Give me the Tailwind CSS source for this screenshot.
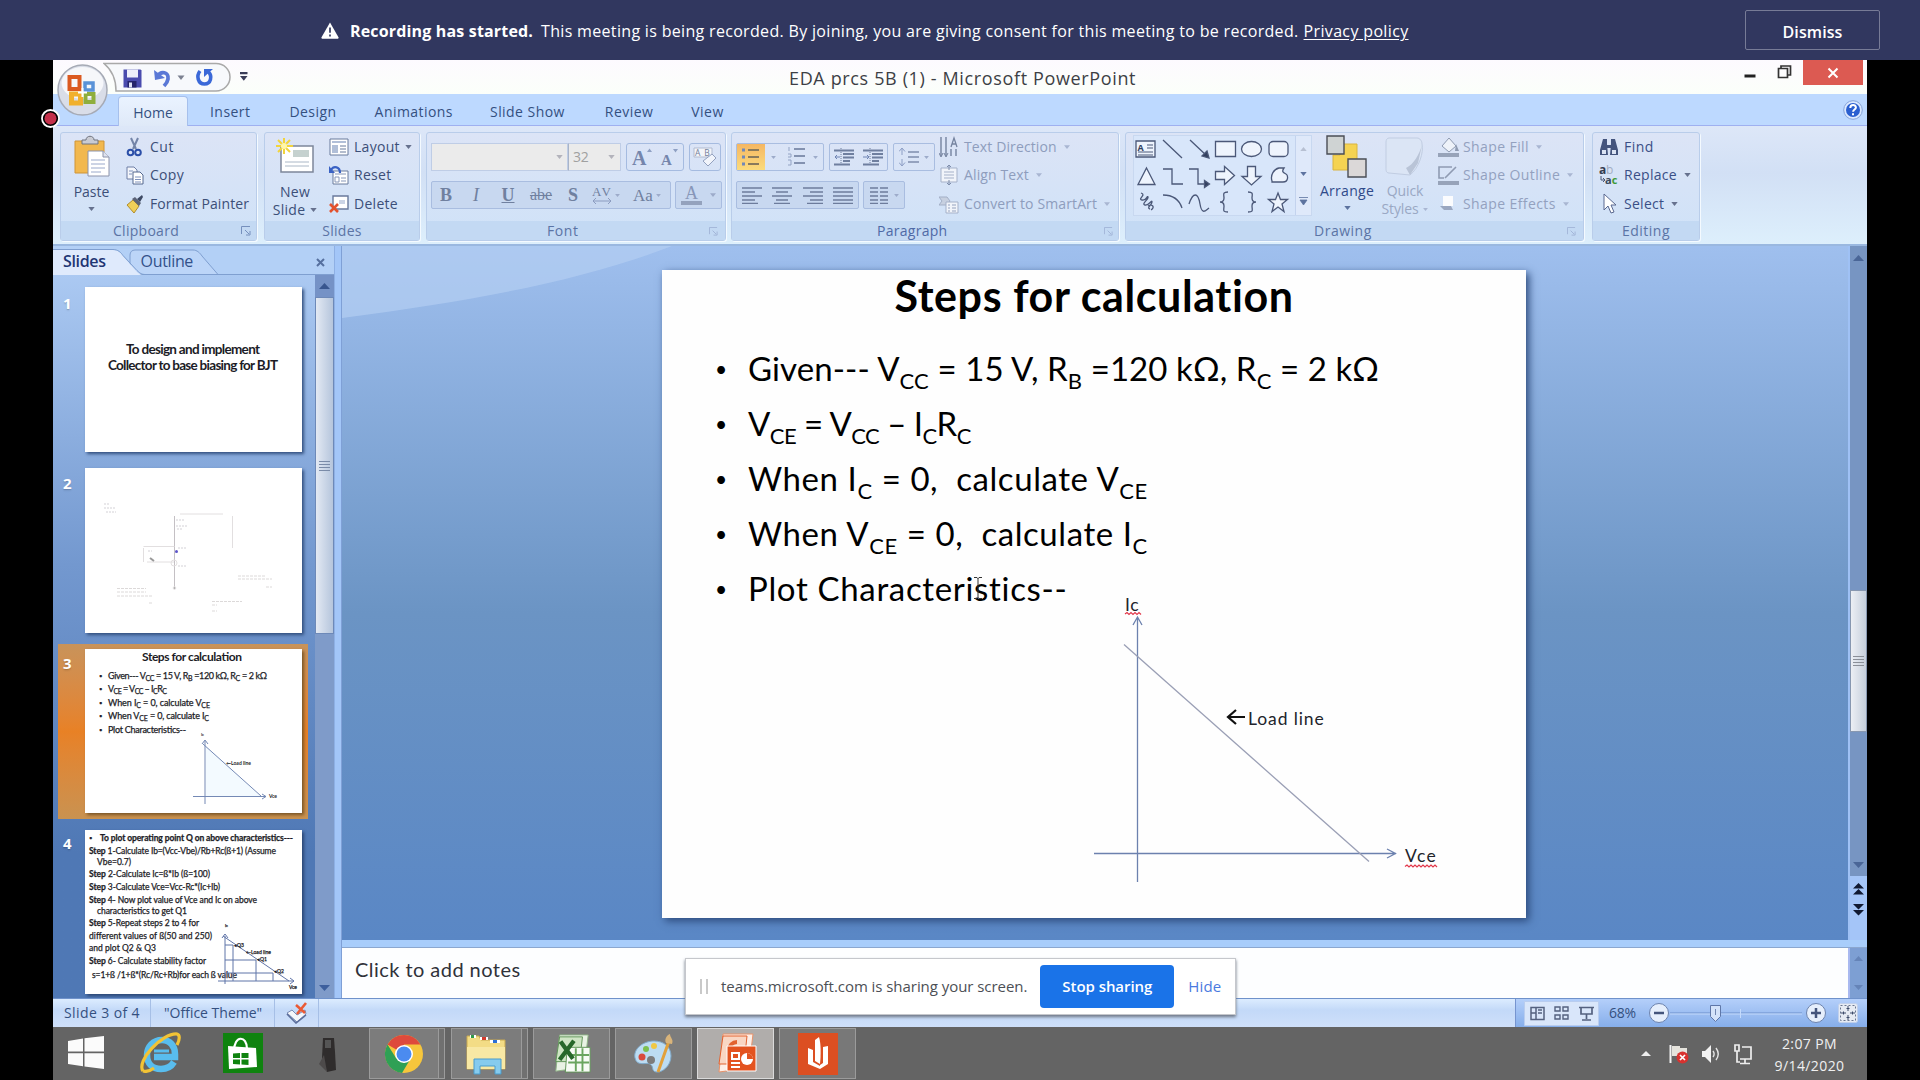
<!DOCTYPE html>
<html lang="en">
<head>
<meta charset="utf-8">
<title>EDA prcs 5B (1) - Microsoft PowerPoint</title>
<script src="https://cdn.jsdelivr.net/npm/@tailwindcss/browser@4"></script>
</head>
<body class="w-[1920px] h-[1080px] overflow-hidden bg-black flex flex-col font-['Open_Sans',sans-serif] text-[14px] leading-none tracking-[0.28px] text-[#3c4f78] whitespace-nowrap">

<!-- meeting banner -->
<header class="h-[60px] shrink-0 bg-[#31375f] text-white flex items-center pl-[321px] pr-10 pt-[2px] text-[16px]">
  <svg class="w-[18px] h-[17px] mt-[-2px]" viewBox="0 0 18 17"><path d="M9 .5 17.6 15.6a.9.9 0 0 1-.8 1.1H1.2a.9.9 0 0 1-.8-1.1z" fill="#fff"/><path d="M9 5.5v5.2M9 12.6v2" stroke="#31375f" stroke-width="1.7"/></svg>
  <span class="ml-[11px] font-bold tracking-[0.17px]">Recording has started.</span>
  <span class="ml-2 tracking-[0.32px]">This meeting is being recorded. By joining, you are giving consent for this meeting to be recorded.</span>
  <a class="ml-[5px] underline underline-offset-2 tracking-[0.35px]">Privacy policy</a>
  <button class="ml-auto w-[135px] h-10 border border-[#777b96] rounded-[2px] font-semibold mt-[-2px] pt-[3px] tracking-[0.1px]">Dismiss</button>
</header>

<div class="relative w-[1814px] h-[1020px] ml-[53px] flex flex-col">

<!-- title bar -->
<div class="h-[34px] shrink-0 bg-gradient-to-b from-[#fdfaff] to-[#fbfffa] flex items-start">
  <svg class="w-[200px] h-[34px] ml-[50px]" viewBox="0 0 200 34" fill="none">
    <path d="M1 3.500h112c8 0 14 6 14 13.500s-6 14-14 14H13c0-10-3-20-12-27.500z" fill="#f7f9fc" stroke="#a9a9a9" stroke-width="1.500"/>
    <path d="M20.500 9.500h17l1 1v17h-18z" fill="#4a4cae"/><path d="M24 9.500h11v8H24z" fill="#eef0fb"/><path d="M24.500 21h9v6.500h-9z" fill="#25246a"/><path d="M26 22.500h3v5h-3z" fill="#dfe2f5"/>
    <path d="M51 10l1 10 10-2z" fill="#5a78d6"/><path d="M54 17c4-7 12-5 11 2-.4 3-2 5-4 7" stroke="#5a78d6" stroke-width="3.800"/>
    <path d="M74.500 15.500h7l-3.500 4.500z" fill="#7b8090"/>
    <path d="M97 11c-4 5-2 13 4.500 13s8-8 4-12" stroke="#3a68d8" stroke-width="3.600"/><path d="M110 9h-9v8z" fill="#3a68d8"/>
    <path d="M137 12h7.500v2.200H137zM137 16h7.500l-3.700 4.800z" fill="#3a3c58"/>
  </svg>
  <span class="ml-[486px] mt-[9px] text-[18px] tracking-[0.64px] text-[#3d3f45]">EDA prcs 5B (1) - Microsoft PowerPoint</span>
  <div class="ml-auto flex items-start">
    <svg class="w-[60px] h-[26px]" viewBox="0 0 60 26" fill="none"><path d="M1.500 16h11" stroke="#222" stroke-width="3"/><path d="M35.500 8.500h9v9h-9zM38 8V6h9.500v9H45" stroke="#333" stroke-width="1.700"/></svg>
    <div class="w-[60px] h-[25px] bg-[#dc5a52] flex items-center justify-center mr-[4px]"><svg class="w-3 h-3" viewBox="0 0 12 12"><path d="M1.500 1.500l9 9M10.500 1.500l-9 9" stroke="#fff" stroke-width="2"/></svg></div>
  </div>
</div>

<!-- tab strip -->
<nav class="h-[32px] shrink-0 bg-[#bdd9ff] border-b border-[#9fb0f0] flex items-end text-[#34507f] pl-[65px]">
  <div class="w-[70px] h-[30px] bg-gradient-to-b from-[#eaf3ff] to-[#dfe9f8] border border-b-0 border-[#a6c0ec] rounded-t-[4px] flex justify-center pt-[9px] mb-[-1px] tracking-normal">Home</div>
  <div class="flex items-center h-[27px] tracking-[0.45px]">
    <span class="ml-[22px]">Insert</span>
    <span class="ml-[39px]">Design</span>
    <span class="ml-[38px]">Animations</span>
    <span class="ml-[37px]">Slide Show</span>
    <span class="ml-[40px]">Review</span>
    <span class="ml-[38px]">View</span>
  </div>
  <svg class="w-5 h-5 ml-auto mr-[4px] mb-[5px]" viewBox="0 0 20 20"><circle cx="10" cy="10" r="9.300" fill="#dbe9ff" stroke="#86a3d8"/><circle cx="10" cy="10" r="7" fill="#2a5fd0"/><path d="M7.300 8c0-4 5.600-3.700 5.600-.6 0 2.200-2.800 2-2.800 4.300M10 13.200v2" fill="none" stroke="#fff" stroke-width="2"/></svg>
</nav>

<!-- ribbon -->
<div class="h-[120px] shrink-0 bg-gradient-to-b from-[#dde7f8] via-[#d2e0f5] via-40% to-[#ddeffc] border-b-2 border-[#9ab8e0] flex pl-[7px] pt-[6px]">

  <!-- Clipboard -->
  <section class="w-[197px] h-[109px] border border-[#b9cdea] rounded-[3px] shadow-[1px_1px_0_#f4faff] bg-gradient-to-b from-[#dce4f6] to-[#cfe2f8] flex flex-col">
    <div class="h-[88px] flex">
      <div class="w-[61px] flex flex-col items-center">
        <svg class="w-[38px] h-[42px] mt-[2px]" viewBox="0 0 38 42"><path d="M2 6h29v32H2z" fill="#f2b84e" stroke="#cf9437"/><path d="M9 9V5h4c0-5 8-5 8 0h4v4z" fill="#c9cbd3" stroke="#70747f"/><path d="M15 16h15l6 6v19H15z" fill="#fff" stroke="#8c93ab"/><path d="M30 16v6h6" fill="#dfe3ef" stroke="#8c93ab"/><path d="M18 25h14M18 29h14M18 33h14M18 37h10" stroke="#9aa9cb"/></svg>
        <span class="mt-[8px] tracking-normal">Paste</span>
        <svg class="w-[7px] h-1 mt-[8px]" viewBox="0 0 8 5"><path d="M0 0h8L4 5z" fill="#66718e"/></svg>
      </div>
      <div class="flex flex-col flex-1 pl-[4px] pb-[3px]">
        <div class="flex-1 flex items-center gap-[6px]"><svg class="w-[18px] h-5" viewBox="0 0 18 20" fill="none"><path d="M5 1l5 11M12 1L7 12" stroke="#7384a8" stroke-width="2"/><circle cx="4.500" cy="15.500" r="2.800" stroke="#2b4fa8" stroke-width="2"/><circle cx="12" cy="15.500" r="2.800" stroke="#2b4fa8" stroke-width="2"/></svg><span class="tracking-[0.5px]">Cut</span></div>
        <div class="flex-1 flex items-center gap-[6px]"><svg class="w-[18px] h-5" viewBox="0 0 18 20"><path d="M1 2h7l3 3v9H1z" fill="#f4f6fb" stroke="#6e7fa6"/><path d="M7 7h7l3 3v9H7z" fill="#fff" stroke="#55688f"/><path d="M3 6h4M3 9h3M9 12h6M9 14.500h6M9 17h6" stroke="#7f92bd"/></svg><span>Copy</span></div>
        <div class="flex-1 flex items-center gap-[6px]"><svg class="w-[18px] h-5" viewBox="0 0 18 20"><path d="M1 11l6-5 6 6-5 7z" fill="#efcf58" stroke="#b08c2e"/><path d="M6 5l3-2 6 6-2 3z" fill="#5b6377"/><path d="M11 5l5-4 1 2-3 5z" fill="#3d4963"/></svg><span class="tracking-[0.1px]">Format Painter</span></div>
      </div>
    </div>
    <div class="h-[19px] pt-px flex items-center bg-[#c3d9f3] text-[#5b74a5]"><span class="ml-[52px]">Clipboard</span><svg class="w-[10px] h-[10px] ml-auto mr-[5px]" viewBox="0 0 10 10"><path d="M.5 8V.5H9M4 4l4 4M9 5v4H5" fill="none" stroke="#7690bd"/></svg></div>
  </section>

  <!-- Slides -->
  <section class="ml-[7px] w-[156px] h-[109px] border border-[#b9cdea] rounded-[3px] shadow-[1px_1px_0_#f4faff] bg-gradient-to-b from-[#dce4f6] to-[#cfe2f8] flex flex-col">
    <div class="h-[88px] flex">
      <div class="w-[60px] flex flex-col items-center">
        <svg class="w-[40px] h-[38px] mt-[4px]" viewBox="0 0 40 38"><path d="M6 9h32v26H6z" fill="#fff" stroke="#7d879b" stroke-width="1.500"/><path d="M18 13h16v7H18z" fill="#c5d1cf"/><path d="M10 25h24M10 29h24" stroke="#aab7c6"/><path d="M9 1v16M1 9h17M3 3l12 12M15 3L3 15" stroke="#f2d43c" stroke-width="2"/><circle cx="9" cy="9" r="3" fill="#fff6a8"/></svg>
        <span class="mt-[10px]">New</span>
        <div class="flex items-center mt-[4px] gap-[5px]"><span>Slide</span><svg class="w-[7px] h-1" viewBox="0 0 8 5"><path d="M0 0h8L4 5z" fill="#66718e"/></svg></div>
      </div>
      <div class="flex flex-col flex-1 pl-[4px] pb-[3px]">
        <div class="flex-1 flex items-center gap-[5px]"><svg class="w-5 h-[18px]" viewBox="0 0 20 18"><path d="M1 1h18v16H1z" fill="#fff" stroke="#697a9c"/><path d="M3 3h14v2H3zM3 7h6v8H3z" fill="#b1bfd8"/><path d="M11 8h6M11 11h6M11 14h6" stroke="#697a9c"/></svg><span>Layout</span><svg class="w-[7px] h-1" viewBox="0 0 8 5"><path d="M0 0h8L4 5z" fill="#66718e"/></svg></div>
        <div class="flex-1 flex items-center gap-[5px]"><svg class="w-5 h-5" viewBox="0 0 20 20"><path d="M4 6h15v13H4z" fill="#fff" stroke="#697a9c"/><path d="M6 9h11M6 12h4v5H6zM12 13h5M12 16h5" stroke="#8797b8" fill="none"/><path d="M2 5c3-5 9-3 9 3" fill="none" stroke="#3a62c4" stroke-width="2.200"/><path d="M0 1v7h6z" fill="#3a62c4"/></svg><span>Reset</span></div>
        <div class="flex-1 flex items-center gap-[5px]"><svg class="w-5 h-[18px]" viewBox="0 0 20 18"><path d="M4 1h15v13H4z" fill="#fff" stroke="#697a9c" stroke-width="1.400"/><path d="M10 5h6v4h-6z" fill="#cbd4e5"/><path d="M1 9l8 8M9 9l-8 8" stroke="#e3522e" stroke-width="2.600"/></svg><span>Delete</span></div>
      </div>
    </div>
    <div class="h-[19px] pt-px flex items-center justify-center bg-[#c3d9f3] text-[#5b74a5]">Slides</div>
  </section>

  <!-- Font -->
  <section class="ml-[6px] w-[300px] h-[109px] border border-[#b9cdea] rounded-[3px] shadow-[1px_1px_0_#f4faff] bg-gradient-to-b from-[#dce4f6] to-[#cfe2f8] flex flex-col">
    <div class="h-[88px] pl-[4px] pt-[10px] flex flex-col gap-[10px] text-[#8d9cbc]">
      <div class="flex h-7">
        <div class="w-[137px] border border-[#bfcde6] bg-[#ebebeb] flex items-center justify-end pr-[4px]"><svg class="w-[7px] h-1" viewBox="0 0 8 5"><path d="M0 0h8L4 5z" fill="#b3b3bb"/></svg></div>
        <div class="w-[53px] border border-l-[#a9b4c8] border-[#bfcde6] bg-[#ebebeb] flex items-center justify-between pl-[4px] pr-[5px] text-[#a0a0a0] tracking-tight"><span>32</span><svg class="w-[7px] h-1" viewBox="0 0 8 5"><path d="M0 0h8L4 5z" fill="#b3b3bb"/></svg></div>
        <div class="ml-[5px] w-[58px] border border-[#a5bbe0] rounded-[3px] flex items-center justify-around"><svg class="w-[22px] h-[22px]" viewBox="0 0 22 22"><text x="1" y="19" font-size="20" font-weight="bold" fill="#7586ac" font-family="Liberation Serif">A</text><path d="M16 6l2.500-3.500L21 6z" fill="#8fa0c4"/></svg><svg class="w-[20px] h-[22px]" viewBox="0 0 20 22"><text x="1" y="19" font-size="15" font-weight="bold" fill="#7586ac" font-family="Liberation Serif">A</text><path d="M13 3h5l-2.500 3.500z" fill="#8fa0c4"/></svg></div>
        <div class="ml-[5px] w-[32px] border border-[#a5bbe0] rounded-[3px] flex items-center justify-center"><svg class="w-6 h-[22px]" viewBox="0 0 24 22"><path d="M1 2h18v9H1z" fill="#f3f5fa" stroke="#b1bbd0"/><text x="2" y="10" font-size="8.500" fill="#74809a" font-family="Open Sans" textLength="15">AB</text><path d="M10 15l9-7 4 4-8 8z" fill="#f1f4fb" stroke="#93a1bf"/></svg></div>
      </div>
      <div class="flex h-7">
        <div class="w-[240px] border border-[#a9bde0] rounded-[2px] bg-[#c8d8f0] flex items-center text-[#70809f] font-['Liberation_Serif',serif] text-[18px] tracking-normal">
          <span class="w-[28px] text-center font-bold">B</span><span class="w-[32px] text-center italic">I</span><span class="w-[32px] text-center font-bold underline">U</span><span class="w-[34px] text-center line-through text-[16px]">abe</span><span class="w-[30px] text-center font-bold">S</span>
          <span class="w-[36px] flex items-center justify-center gap-[3px]"><svg class="w-5 h-5" viewBox="0 0 20 20"><text x="0" y="11" font-size="13" textLength="19" fill="#70809f" font-family="Liberation Serif">AV</text><path d="M1 16h18M4 13l-3 3 3 3M16 13l3 3-3 3" fill="none" stroke="#8c9cc0"/></svg><svg class="w-[5px] h-[3px]" viewBox="0 0 8 5"><path d="M0 0h8L4 5z" fill="#9dabca"/></svg></span>
          <span class="w-[46px] flex items-center justify-center gap-[3px] text-[17px]">Aa<svg class="w-[5px] h-[3px]" viewBox="0 0 8 5"><path d="M0 0h8L4 5z" fill="#9dabca"/></svg></span>
        </div>
        <div class="ml-[4px] w-[47px] border border-[#a9bde0] rounded-[2px] bg-[#c8d8f0] flex items-center justify-center gap-[8px]"><svg class="w-[21px] h-[22px]" viewBox="0 0 21 22"><text x="4" y="15" font-size="18" fill="#8796b8" font-family="Liberation Serif">A</text><path d="M0 17h21v4H0z" fill="#94a2bd"/></svg><svg class="w-[6px] h-1" viewBox="0 0 8 5"><path d="M0 0h8L4 5z" fill="#9dabca"/></svg></div>
      </div>
    </div>
    <div class="h-[19px] pt-px flex items-center bg-[#c3d9f3] text-[#5b74a5]"><span class="ml-[120px] tracking-[0.6px]">Font</span><svg class="w-[9px] h-[9px] ml-auto mr-[7px]" viewBox="0 0 10 10"><path d="M.5 8V.5H9M4 4l4 4M9 5v4H5" fill="none" stroke="#9fb2d6"/></svg></div>
  </section>

  <!-- Paragraph -->
  <section class="ml-[5px] w-[388px] h-[109px] border border-[#b9cdea] rounded-[3px] shadow-[1px_1px_0_#f4faff] bg-gradient-to-b from-[#dce4f6] to-[#cfe2f8] flex flex-col">
    <div class="h-[88px] pl-[4px] flex text-[#8e9dbd]">
      <div class="w-[200px] pt-[10px] flex flex-col gap-[10px]">
        <div class="flex h-7">
          <div class="w-[88px] border border-[#a9bde0] rounded-[2px] flex items-center">
            <div class="w-[28px] h-full bg-gradient-to-b from-[#f5b763] to-[#fbdb7c] flex items-center justify-center"><svg class="w-[18px] h-[18px]" viewBox="0 0 18 18"><path d="M6 2h11M6 9h11M6 16h11" stroke="#8a7a5c" stroke-width="1.800"/><path d="M0 2h3M0 9h3M0 16h3" stroke="#7188b8" stroke-width="3"/></svg></div>
            <svg class="w-[5px] h-[3px] ml-[6px]" viewBox="0 0 8 5"><path d="M0 0h8L4 5z" fill="#9dabca"/></svg>
            <svg class="w-[18px] h-5 ml-[11px]" viewBox="0 0 18 20"><path d="M7 2h11M7 9h11M7 16h11" stroke="#8492b0" stroke-width="1.800"/><path d="M2 0v4M1 7h3v3H1M1 13h3v5H1" stroke="#93a3c4" fill="none"/></svg>
            <svg class="w-[5px] h-[3px] ml-[8px]" viewBox="0 0 8 5"><path d="M0 0h8L4 5z" fill="#9dabca"/></svg>
          </div>
          <div class="ml-[5px] w-[59px] border border-[#a9bde0] rounded-[2px] flex items-center justify-around">
            <svg class="w-5 h-[18px]" viewBox="0 0 20 18"><path d="M7 0v18" stroke="#6f7f9f" stroke-dasharray="1 1"/><path d="M0 2.500h20M9 6h11M9 9.500h11M9 13h7M0 16.500h16" stroke="#6f7f9f" stroke-width="1.900"/><path d="M6 9H1M3 7L1 9l2 2" stroke="#6f84b4" fill="none"/></svg>
            <svg class="w-5 h-[18px]" viewBox="0 0 20 18"><path d="M7 0v18" stroke="#6f7f9f" stroke-dasharray="1 1"/><path d="M0 2.500h20M9 6h11M9 9.500h11M9 13h7M0 16.500h16" stroke="#6f7f9f" stroke-width="1.900"/><path d="M0 9h6M4 7l2 2-2 2" stroke="#6f84b4" fill="none"/></svg>
          </div>
          <div class="ml-[5px] w-[42px] border border-[#a9bde0] rounded-[2px] flex items-center justify-center gap-[5px]"><svg class="w-5 h-[18px]" viewBox="0 0 20 18"><path d="M9 4h11M9 9h11M9 14h11" stroke="#7f8dad" stroke-width="1.600"/><path d="M3 1v6M0 3.500L3 0l3 3.500M3 11v6M0 14.500L3 18l3-3.500" stroke="#8c9ec4" fill="none"/></svg><svg class="w-[5px] h-[3px]" viewBox="0 0 8 5"><path d="M0 0h8L4 5z" fill="#9dabca"/></svg></div>
        </div>
        <div class="flex h-7">
          <div class="w-[123px] border border-[#a9bde0] rounded-[2px] bg-[#c8d8f0] flex items-center justify-around">
            <svg class="w-5 h-[18px]" viewBox="0 0 20 18"><path d="M0 2h20M0 6h13M0 10h20M0 14h13M0 17.500h16" stroke="#6d7c9c" stroke-width="1.700"/></svg>
            <svg class="w-5 h-[18px]" viewBox="0 0 20 18"><path d="M0 2h20M4 6h12M0 10h20M4 14h12M2 17.500h16" stroke="#6d7c9c" stroke-width="1.700"/></svg>
            <svg class="w-5 h-[18px]" viewBox="0 0 20 18"><path d="M0 2h20M7 6h13M0 10h20M7 14h13M4 17.500h16" stroke="#6d7c9c" stroke-width="1.700"/></svg>
            <svg class="w-5 h-[18px]" viewBox="0 0 20 18"><path d="M0 2h20M0 6h20M0 10h20M0 14h20M0 17.500h20" stroke="#6d7c9c" stroke-width="1.700"/></svg>
          </div>
          <div class="ml-[4px] w-[42px] border border-[#a9bde0] rounded-[2px] bg-[#c8d8f0] flex items-center justify-center gap-[6px]"><svg class="w-[18px] h-[18px]" viewBox="0 0 18 18"><path d="M0 2h8M0 6h8M0 10h8M0 14h8M0 17.500h8M10 2h8M10 6h8M10 10h8M10 14h8M10 17.500h8" stroke="#6d7c9c" stroke-width="1.700"/></svg><svg class="w-[5px] h-[3px]" viewBox="0 0 8 5"><path d="M0 0h8L4 5z" fill="#9dabca"/></svg></div>
        </div>
      </div>
      <div class="flex flex-col flex-1 pl-[3px] pb-[3px] tracking-[0.12px]">
        <div class="flex-1 flex items-center gap-[5px]"><svg class="w-5 h-[22px]" viewBox="0 0 20 22"><path d="M2 1v19M7 1v19M12 13v7M17 13v7" stroke="#75839f" stroke-width="1.400"/><path d="M0 17l2 4 2-4M5 17l2 4 2-4" stroke="#75839f" fill="none"/><path d="M12 11l3-9 3 9M13 8h4" stroke="#75839f" stroke-width="1.300" fill="none"/></svg><span>Text Direction</span><svg class="w-[6px] h-1 ml-[2px]" viewBox="0 0 8 5"><path d="M0 0h8L4 5z" fill="#a9b6d2"/></svg></div>
        <div class="flex-1 flex items-center gap-[5px]"><svg class="w-5 h-5" viewBox="0 0 20 20"><path d="M2 3h16v14H2z" fill="#f1f4fa" stroke="#a5b1c9"/><path d="M5 7h10M5 10h10M5 13h10" stroke="#a5b1c9"/><path d="M10 0v5M8 2l2-2 2 2M10 15v5M8 18l2 2 2-2" stroke="#7d8cab" fill="none"/></svg><span>Align Text</span><svg class="w-[6px] h-1 ml-[2px]" viewBox="0 0 8 5"><path d="M0 0h8L4 5z" fill="#a9b6d2"/></svg></div>
        <div class="flex-1 flex items-center gap-[5px]"><svg class="w-5 h-5" viewBox="0 0 20 20"><path d="M0 3h8l3 4-3 4H0l3-4z" fill="#c7d0e0" stroke="#a3afc6"/><path d="M7 8h12v11H7z" fill="#f1f4fa" stroke="#a5b1c9"/><path d="M9 11h2M13 11h4M9 14h2M13 14h4M9 17h2M13 17h4" stroke="#94a2bf"/></svg><span>Convert to SmartArt</span><svg class="w-[6px] h-1 ml-[2px]" viewBox="0 0 8 5"><path d="M0 0h8L4 5z" fill="#a9b6d2"/></svg></div>
      </div>
    </div>
    <div class="h-[19px] pt-px flex items-center bg-[#c3d9f3] text-[#4f6aa6]"><span class="ml-[145px]">Paragraph</span><svg class="w-[9px] h-[9px] ml-auto mr-[5px]" viewBox="0 0 10 10"><path d="M.5 8V.5H9M4 4l4 4M9 5v4H5" fill="none" stroke="#9fb2d6"/></svg></div>
  </section>

  <!-- Drawing -->
  <section class="ml-[6px] w-[459px] h-[109px] border border-[#b9cdea] rounded-[3px] shadow-[1px_1px_0_#f4faff] bg-gradient-to-b from-[#dce4f6] to-[#cfe2f8] flex flex-col">
    <div class="h-[88px] flex">
      <div class="ml-[7px] mt-[2px] w-[179px] h-[81px] bg-[#d8e6fa] border border-[#c8d8f0] flex">
        <svg class="w-[161px] h-[79px]" viewBox="1134 136 161 79" fill="#eef4fd" stroke="#4b5878" stroke-width="1.300">
          <path d="M1136 141h19v16h-19z"/><path d="M1147 145h6M1147 148h6M1138 152h15M1138 155h15" stroke-width="1"/><text x="1137.500" y="151" font-size="9" font-weight="bold" fill="#33405f" stroke="none" font-family="Open Sans">A</text>
          <path d="M1163 140l19 18M1190 140l17 16" fill="none"/><path d="M1209 158l-2-7-5 5z" fill="#33405f"/>
          <path d="M1215.500 141.500h20v15h-20z"/><ellipse cx="1251.500" cy="149" rx="10" ry="7.500"/><rect x="1269" y="141.500" width="19" height="15" rx="4"/>
          <path d="M1146.500 168l8.500 16.500h-17z"/>
          <path d="M1163 169h9v15h11M1189 169h9v15h9" fill="none"/><path d="M1209.500 184l-5-3.500v7z" fill="#33405f"/>
          <path d="M1215.500 171.500h9v-5l10 9-10 9v-5h-9z"/><path d="M1247.500 166.500h8v10h5.500l-9.500 8.500-9.500-8.500h5.500z"/>
          <path d="M1272 181c-2-6 2-12 7-13h5c-3 4 0 5 2 6s3 8-3 8h-11z"/>
          <path d="M1141 193c6 2-4 6 1 7s5-5 6-3-7 7-3 8 7-6 7-3-6 6-2 7M1148 206c5-3 7 2 3 4" fill="none"/>
          <path d="M1163 195c10 0 16 4 19 13M1189 204c4-12 9-12 11 0s6 6 9 4" fill="none"/>
          <path d="M1228 192c-6 0-4 3-4 6 0 2-1 4-4 4 3 0 4 2 4 4 0 4-2 6 4 6M1248 192c6 0 4 3 4 6 0 2 1 4 4 4-3 0-4 2-4 4 0 4 2 6-4 6" fill="none"/>
          <path d="M1278 193l2.500 6.500h7l-5.500 4.500 2 7.500-6-4.500-6 4.500 2-7.500-5.500-4.500h7z"/>
        </svg>
        <div class="w-4 border-l border-[#c3d3ee] flex flex-col items-center justify-around bg-[#dfe9fa]">
          <svg class="w-[7px] h-1" viewBox="0 0 8 5"><path d="M4 0l4 5H0z" fill="#b7c0d2"/></svg>
          <svg class="w-[7px] h-1" viewBox="0 0 8 5"><path d="M0 0h8L4 5z" fill="#5d739f"/></svg>
          <svg class="w-[9px] h-2" viewBox="0 0 9 8"><path d="M0 .5h9M1 3h7L4.500 8z" fill="#5d739f" stroke="#5d739f" stroke-width=".8"/></svg>
        </div>
      </div>
      <div class="ml-[7px] w-[56px] flex flex-col items-center text-[#2f4a8a]">
        <svg class="w-[42px] h-[43px] mt-[2px]" viewBox="0 0 42 43"><path d="M14 9h17v26H7V20h7z" fill="#f5d352" stroke="#d9b440"/><path d="M1 1h17v18H1z" fill="#cfd3d3" stroke="#4a4d55" stroke-width="1.400"/><path d="M22 24h18v18H22z" fill="#dbd8d8" stroke="#4a4d55" stroke-width="1.400"/></svg>
        <span class="mt-[6px]">Arrange</span>
        <svg class="w-[7px] h-1 mt-[8px]" viewBox="0 0 8 5"><path d="M0 0h8L4 5z" fill="#5d739f"/></svg>
      </div>
      <div class="ml-[3px] w-[54px] flex flex-col items-center text-[#9aa8c4] tracking-[-0.15px]">
        <svg class="w-[40px] h-[40px] mt-[4px]" viewBox="0 0 40 40"><path d="M4 1h28c3 0 5 3 5 6 2 8-3 24-12 31L4 36c-3 0-3-3-3-5V5c0-2 1-4 3-4z" fill="#dbe5f5" stroke="#c1cde2"/><path d="M37 8l-4 18-8 12-4-7c8-4 13-13 16-23z" fill="#b9c4d7"/></svg>
        <span class="mt-[7px]">Quick</span>
        <div class="flex items-center mt-[4px] gap-[5px]"><span>Styles</span><svg class="w-[5px] h-[3px]" viewBox="0 0 8 5"><path d="M0 0h8L4 5z" fill="#a9b6d2"/></svg></div>
      </div>
      <div class="flex flex-col flex-1 pl-[6px] pb-[3px] text-[#93a1bf] tracking-[0.4px]">
        <div class="flex-1 flex items-center gap-[4px]"><svg class="w-[21px] h-[22px]" viewBox="0 0 21 22"><path d="M4 10l7-8 7 8-7 6z" fill="#eef2f9" stroke="#8f9bb2"/><path d="M18 8l3 7h-4z" fill="#8f9bb2"/><path d="M0 17h21v4H0z" fill="#97a3b9"/></svg><span>Shape Fill</span><svg class="w-[6px] h-1 ml-[3px]" viewBox="0 0 8 5"><path d="M0 0h8L4 5z" fill="#a9b6d2"/></svg></div>
        <div class="flex-1 flex items-center gap-[4px]"><svg class="w-[21px] h-[22px]" viewBox="0 0 21 22"><path d="M14 3H1v11h5M7 14L18 3" fill="none" stroke="#8f9bb2" stroke-width="1.600"/><path d="M0 17h21v4H0z" fill="#97a3b9"/></svg><span>Shape Outline</span><svg class="w-[6px] h-1 ml-[3px]" viewBox="0 0 8 5"><path d="M0 0h8L4 5z" fill="#a9b6d2"/></svg></div>
        <div class="flex-1 flex items-center gap-[4px]"><svg class="w-[21px] h-[18px]" viewBox="0 0 21 18"><path d="M2 11h11l2 4H6z" fill="#9aa7c0"/><path d="M5 1h10v10H5z" fill="#fbfcfe"/></svg><span>Shape Effects</span><svg class="w-[6px] h-1 ml-[3px]" viewBox="0 0 8 5"><path d="M0 0h8L4 5z" fill="#a9b6d2"/></svg></div>
      </div>
    </div>
    <div class="h-[19px] pt-px flex items-center bg-[#c3d9f3] text-[#5b74a5]"><span class="ml-[188px] tracking-[0.5px]">Drawing</span><svg class="w-[9px] h-[9px] ml-auto mr-[7px]" viewBox="0 0 10 10"><path d="M.5 8V.5H9M4 4l4 4M9 5v4H5" fill="none" stroke="#9fb2d6"/></svg></div>
  </section>

  <!-- Editing -->
  <section class="ml-[8px] w-[108px] h-[109px] border border-[#b9cdea] rounded-[3px] shadow-[1px_1px_0_#f4faff] bg-gradient-to-b from-[#dce4f6] to-[#cfe2f8] flex flex-col text-[#3a4f86]">
    <div class="h-[88px] flex flex-col pl-[6px] pb-[3px]">
      <div class="flex-1 flex items-center gap-[5px]"><svg class="w-5 h-5" viewBox="0 0 20 20"><path d="M4 2h4v5l1 11H1v-5zM12 2h4l3 11v5h-8l1-11z" fill="#44547d"/><path d="M3 13h4v4H3zM13 13h4v4h-4z" fill="#dbe3f3"/><path d="M8 8h4v3H8z" fill="#44547d"/></svg><span class="tracking-[0.5px]">Find</span></div>
      <div class="flex-1 flex items-center gap-[5px]"><svg class="w-5 h-5" viewBox="0 0 20 20"><text x="0" y="9" font-size="12" font-weight="bold" fill="#333b4f" font-family="Open Sans">a</text><text x="7" y="9" font-size="12" fill="#a3adc2" font-family="Open Sans">b</text><path d="M2 11v4h4M4 13l2 2-2 2" fill="none" stroke="#4a5878"/><text x="6" y="19" font-size="11" font-weight="bold" fill="#3b4a5e" font-family="Open Sans" letter-spacing="0">a<tspan fill="#3f9a3a">c</tspan></text></svg><span>Replace</span><svg class="w-[7px] h-1 ml-[2px]" viewBox="0 0 8 5"><path d="M0 0h8L4 5z" fill="#66718e"/></svg></div>
      <div class="flex-1 flex items-center gap-[5px]"><svg class="w-5 h-[21px]" viewBox="0 0 20 21"><path d="M5 1v16l4-4 3 7 3-1-3-7h5z" fill="#fff" stroke="#5a6890"/></svg><span>Select</span><svg class="w-[7px] h-1 ml-[2px]" viewBox="0 0 8 5"><path d="M0 0h8L4 5z" fill="#66718e"/></svg></div>
    </div>
    <div class="h-[19px] pt-px flex items-center justify-center bg-[#c3d9f3] text-[#5b74a5] tracking-[0.5px]">Editing</div>
  </section>
</div>

<!-- work area -->
<main class="h-[752px] shrink-0 flex">

  <!-- slide list pane -->
  <aside class="w-[281px] flex flex-col bg-[#a6c6f0]">
    <div class="h-[29px] flex bg-[#b3d0f6] relative text-[16px] tracking-[-0.35px]">
      <svg class="absolute inset-0 w-[281px] h-[29px]" viewBox="0 0 281 29"><path d="M0 28.500h281" stroke="#7f9fd0"/><path d="M77 28.500V9c0-3 2-5 5-5h58c4 0 7 3 9 6l16 18.500z" fill="#bcd5f8" stroke="#7f9fd0"/><path d="M0 29V4h60c5 0 8 3 10 6l14 16c2 2 4 3 6 3z" fill="#dfeafc"/><path d="M0 3.500h60c5 0 8 3 10 6l14 15c3 3 5 4 8 4" fill="none" stroke="#7f9fd0"/><path d="M264 13l7 7M271 13l-7 7" stroke="#56709f" stroke-width="2"/></svg>
      <span class="relative ml-[10px] mt-[7px] font-semibold text-[#1e3573]">Slides</span>
      <span class="relative ml-[35px] mt-[7px] text-[#33518a]">Outline</span>
    </div>
    <div class="flex-1 flex min-h-0">
      <div class="w-[262px] bg-gradient-to-b from-[#abc9f2] via-[#7398cf] via-40% to-[#4f78b5] to-80% pl-[5px] pt-[12px] flex flex-col text-white text-[15px] font-bold tracking-normal">
        <div class="flex h-[181px]"><span class="w-[27px] pl-[5px] pt-[9px] text-shadow-sm">1</span>
          <svg class="w-[217px] h-[165px] bg-white shadow-[2px_2px_3px_#33507f]" viewBox="85 286 217 165" font-family="Lato" font-size="13.500" font-weight="bold" fill="#1c1c26"><text x="126" y="352.500" textLength="134">To design and implement</text><text x="108" y="368.500" textLength="170">Collector to base biasing for BJT</text></svg></div>
        <div class="flex h-[176px]"><span class="w-[27px] pl-[5px] pt-[8px] text-shadow-sm">2</span>
          <svg class="w-[217px] h-[165px] bg-white shadow-[2px_2px_3px_#33507f]" viewBox="85 467 217 165" fill="none" stroke="#e2dfe0"><path d="M174.500 515v72" stroke="#c4c0c4"/><path d="M180 513h43M232.500 515v32M143.500 545.500h31M143.500 547v14M147 561h27"/><path d="M176 519h8M176 525h12M177 528h6M178 547h8M178 565h9M148 550h4M104 503h6M104 507h12M106 511h10" stroke="#d3d1d6" stroke-dasharray="2 1"/><path d="M117 587.500h29M117 591h29M117 595h36M149 602h4M238 575h27M238 578h34M266 586h6M212 600.500h30M212 604h5M212 610h5" stroke="#dcd9d9" stroke-dasharray="3 1"/><circle cx="176.500" cy="550.500" r="1.500" fill="#5d55c9" stroke="none"/><circle cx="174" cy="562" r="3"/><circle cx="174.500" cy="587" r="1.300" fill="#aaa"/><path d="M150 557l4 3" stroke="#999" stroke-width="2"/></svg></div>
        <div class="flex h-[175px] w-[250px] bg-gradient-to-b from-[#c8935a] via-[#e88125] via-50% to-[#c99250] pt-[5px]"><span class="w-[27px] pl-[5px] pt-[7px] text-shadow-sm">3</span>
          <svg class="w-[217px] h-[164px] bg-white shadow-[2px_2px_3px_#7a5527]" viewBox="85 648 217 164" font-family="Lato" font-size="9" fill="#1c1c26">
            <text x="142" y="659.500" font-size="12" font-weight="bold" textLength="100">Steps for calculation</text>
            <g font-weight="normal" stroke="#1c1c26" stroke-width=".25"><text x="99" y="677" font-size="6">•</text><text x="108" y="678" textLength="159">Given--- V<tspan font-size="7" dy="2">CC</tspan><tspan dy="-2"> = 15 V, R</tspan><tspan font-size="7" dy="2">B</tspan><tspan dy="-2"> =120 kΩ, R</tspan><tspan font-size="7" dy="2">C</tspan><tspan dy="-2"> = 2 kΩ</tspan></text>
            <text x="99" y="690" font-size="6">•</text><text x="108" y="691" textLength="59">V<tspan font-size="7" dy="2">CE</tspan><tspan dy="-2"> = V</tspan><tspan font-size="7" dy="2">CC</tspan><tspan dy="-2"> – I</tspan><tspan font-size="7" dy="2">C</tspan><tspan dy="-2">R</tspan><tspan font-size="7" dy="2">C</tspan></text>
            <text x="99" y="703.500" font-size="6">•</text><text x="108" y="704.500" textLength="102">When I<tspan font-size="7" dy="2">C</tspan><tspan dy="-2"> = 0,  calculate V</tspan><tspan font-size="7" dy="2">CE</tspan></text>
            <text x="99" y="717" font-size="6">•</text><text x="108" y="718" textLength="101">When V<tspan font-size="7" dy="2">CE</tspan><tspan dy="-2"> = 0,  calculate I</tspan><tspan font-size="7" dy="2">C</tspan></text>
            <text x="99" y="731" font-size="6">•</text><text x="108" y="732" textLength="78">Plot Characteristics--</text></g>
            <path d="M206 745l54 50h-54z" fill="#f3faff"/><path d="M205 740v63M193 795.500h73M203 743l58 52M202 743l3-4 3 4M262 793l4 2.500-4 2.500" fill="none" stroke="#7489b5"/>
            <text x="201" y="735" font-size="4">Ic</text><text x="226" y="764" font-size="5" font-weight="bold" textLength="25">←Load line</text><text x="269" y="797" font-size="5" font-weight="bold" textLength="8">Vce</text>
          </svg></div>
        <div class="flex h-[164px] mt-[11px]"><span class="w-[27px] pl-[5px] pt-[6px] text-shadow-sm">4</span>
          <svg class="w-[217px] h-[164px] bg-white shadow-[2px_2px_3px_#2b4674]" viewBox="85 829 217 164" font-family="Lato" font-size="8.500" font-weight="normal" fill="#1c1c26" stroke="#1c1c26" stroke-width=".25">
            <text x="89" y="839" font-size="6">•</text><text x="100" y="840" font-weight="bold" textLength="193">To plot operating point Q on above characteristics---</text>
            <text x="89" y="853" textLength="187"><tspan font-weight="bold">Step</tspan> 1-Calculate Ib=(Vcc-Vbe)/Rb+Rc(ß+1) (Assume</text>
            <text x="97" y="864" textLength="34">Vbe=0.7)</text>
            <text x="89" y="875.500" textLength="121"><tspan font-weight="bold">Step</tspan> 2-Calculate Ic=ß*Ib (ß=100)</text>
            <text x="89" y="889" textLength="131"><tspan font-weight="bold">Step</tspan> 3-Calculate Vce=Vcc-Rc*(Ic+Ib)</text>
            <text x="89" y="902" textLength="168"><tspan font-weight="bold">Step</tspan> 4- Now plot value of Vce and Ic on above</text>
            <text x="97" y="913" textLength="90">characteristics to get Q1</text>
            <text x="89" y="925" textLength="110"><tspan font-weight="bold">Step</tspan> 5-Repeat steps 2 to 4 for</text>
            <text x="89" y="938" textLength="123">different  values of ß(50 and 250)</text>
            <text x="89" y="950" textLength="67">and plot Q2 &amp; Q3</text>
            <text x="89" y="963" textLength="117"><tspan font-weight="bold">Step</tspan> 6- Calculate stability factor</text>
            <text x="92" y="976.500" textLength="145">s=1+ß /1+ß*(Rc/Rc+Rb)for each ß value</text>
            <path d="M225 935v48M218 980h76M223 935l66 45M222 937l3-4 3 4M290 977l4 3-4 3M225 944h8v36M225 959h31v21M225 972h48v8" fill="none" stroke="#5f74a8" stroke-width="1"/>
            <text x="225" y="926" font-size="4">Ic</text><text x="234" y="946" font-size="5">◂Q3</text><text x="246" y="952.500" font-size="5" textLength="25">←Load line</text><text x="257" y="960" font-size="5">◂Q1</text><text x="274" y="972" font-size="5">◂Q2</text><text x="289" y="988" font-size="5" textLength="8">Vce</text>
          </svg></div>
      </div>
      <div class="w-[19px] bg-[#7f9bc9] flex flex-col">
        <div class="h-[22px] bg-[#7592c6] flex items-center justify-center"><svg class="w-[11px] h-[6px]" viewBox="0 0 11 6"><path d="M5.500 0L11 6H0z" fill="#38568f"/></svg></div>
        <div class="h-[337px] border border-[#6d89b8] bg-gradient-to-r from-[#e3e9f3] to-[#b5c5dc] flex flex-col items-center justify-center gap-[2px] text-[#7a8ba8]"><i class="w-[11px] h-px bg-current"></i><i class="w-[11px] h-px bg-current"></i><i class="w-[11px] h-px bg-current"></i><i class="w-[11px] h-px bg-current"></i></div>
        <svg class="w-[11px] h-[6px] mt-auto mb-[7px] mx-auto" viewBox="0 0 11 6"><path d="M0 0h11L5.500 6z" fill="#3d5f9d"/></svg>
      </div>
    </div>
  </aside>
  <div class="w-[8px] bg-[#a3c6f8] border-r border-[#7fa0d6] border-l border-l-[#8eb0e4]"></div>

  <div class="w-[1525px] flex flex-col">
    <div class="h-[694px] flex">
      <!-- editing canvas -->
      <div class="relative w-[1506px] pl-[320px] pt-[24px] bg-gradient-to-b from-[#9fbfee] from-0% via-[#6b94c4] via-53% to-[#5a87c5]">
        <svg class="absolute left-0 top-0 w-[400px] h-[120px]" viewBox="0 0 400 120"><path d="M0 0h330C240 35 130 55 0 72z" fill="#b5d0f3" fill-opacity=".65"/></svg>
        <div class="relative w-[864px] h-[648px] bg-[#fefefe] shadow-[3px_3px_8px_#2c4a7c] text-black font-['Lato',sans-serif]">
          <h1 class="pt-[5px] text-center text-[43px] leading-[42px] font-bold tracking-[0.6px]">Steps for calculation</h1>
          <ul class="pt-[24px] pl-[53px] text-[33px] leading-[55px] [&_sub]:text-[22px] [&_sub]:bottom-[-8px] [&_sub]:leading-none [&>li]:flex [&>li]:h-[55px] [&_span]:whitespace-pre [&_b]:text-[21px] [&_b]:w-[33px] [&_b]:font-normal">
            <li><b>•</b><span class="tracking-[0.09px]">Given--- V<sub>CC</sub> = 15 V, R<sub>B</sub> =120 kΩ, R<sub>C</sub> = 2 kΩ</span></li>
            <li><b>•</b><span class="tracking-[-0.53px]">V<sub>CE</sub> = V<sub>CC</sub> – I<sub>C</sub>R<sub>C</sub></span></li>
            <li><b>•</b><span class="tracking-[0.57px]">When I<sub>C</sub> = 0,  calculate V<sub>CE</sub></span></li>
            <li><b>•</b><span class="tracking-[0.57px]">When V<sub>CE</sub> = 0,  calculate I<sub>C</sub></span></li>
            <li><b>•</b><span class="tracking-[0.67px]">Plot Characteristics--</span></li>
          </ul>
          <svg class="absolute inset-0 w-[864px] h-[648px]" viewBox="662 270 864 648" font-family="Lato" font-size="17.500" fill="#22242c">
            <path d="M1137.500 617v265M1094 853.500h302M1133 625l4.500-8 4.500 8M1387 849l8.500 4.500-8.500 4.500" fill="none" stroke="#6c81ae" stroke-width="1.300"/>
            <path d="M1124 644.500l245 217" stroke="#9a9fb5" stroke-width="1.300"/>
            <text x="1125" y="611" textLength="14">Ic</text><text x="1248" y="725" textLength="76">Load line</text><text x="1405" y="862" textLength="31">Vce</text>
            <path d="M1245 717h-16M1236 710l-8 7 8 7" fill="none" stroke="#111" stroke-width="2.200"/>
            <path d="M1125 614l2-1.500 2 2 2-2 2 2 2-2 2 2 2-2 2 2M1405 866.500l2-1.500 2 2 2-2 2 2 2-2 2 2 2-2 2 2 2-2 2 2 2-2 2 2 2-2 2 2 2-2 2 2" fill="none" stroke="#e2374a" stroke-width="1.200"/>
            <path d="M974 577.500h3l1 1 1-1h3M974 598.500h3l1-1 1 1h3M978 578v20" fill="none" stroke="#333"/>
          </svg>
        </div>
      </div>
      <div class="w-[19px] border-l-2 border-[#9fc1f5] bg-[#7795c2] flex flex-col items-center">
        <svg class="w-[11px] h-[6px] mt-[9px]" viewBox="0 0 11 6"><path d="M5.500 0L11 6H0z" fill="#4a6697"/></svg>
        <div class="mt-[329px] w-[17px] h-[142px] border border-[#8797b0] bg-gradient-to-r from-[#eceff4] to-[#c6cfdc] flex flex-col items-center justify-center gap-[2px] text-[#8a8f98]"><i class="w-[11px] h-px bg-current"></i><i class="w-[11px] h-px bg-current"></i><i class="w-[11px] h-px bg-current"></i><i class="w-[11px] h-px bg-current"></i></div>
        <svg class="w-[11px] h-[6px] mt-auto mb-[8px]" viewBox="0 0 11 6"><path d="M0 0h11L5.500 6z" fill="#4a6697"/></svg>
        <div class="h-[64px] w-full bg-[#a4c5f8] flex justify-center pt-[7px]"><svg class="w-[11px] h-[34px]" viewBox="0 0 11 34"><path d="M5.500 0L11 5.500H0zM5.500 6L11 11.500H0zM0 21h11L5.500 26.500zM0 27h11L5.500 32.500z" fill="#111a33"/></svg></div>
      </div>
    </div>
    <div class="h-[8px] bg-[#a8cdfb] border-b border-[#8ba7cf]"></div>
    <!-- notes -->
    <div class="flex-1 flex">
      <div class="w-[1506px] bg-[#fdfeff] pl-[13px] pt-[11px] font-['Lato',sans-serif] text-[20px] tracking-[0.45px] text-[#30323a]">Click to add notes</div>
      <div class="w-[19px] border-l-2 border-[#a9b9f0] bg-[#7d9fd3] flex flex-col items-center justify-between py-[8px]"><svg class="w-[9px] h-[5px]" viewBox="0 0 11 6"><path d="M5.500 0L11 6H0z" fill="#6584b8"/></svg><svg class="w-[9px] h-[5px]" viewBox="0 0 11 6"><path d="M0 0h11L5.500 6z" fill="#6584b8"/></svg></div>
    </div>
  </div>
</main>

<!-- status bar -->
<div class="h-[29px] shrink-0 bg-gradient-to-b from-[#dcecff] via-[#c3d9f8] via-40% to-[#cfe0fa] border-t border-[#6f92cb] flex items-center text-[#34507f]">
  <div class="w-[98px] h-full border-r border-[#a6bfe6] flex items-center pl-[11px] tracking-[0.4px]">Slide 3 of 4</div>
  <div class="w-[124px] h-full border-r border-[#a6bfe6] flex items-center pl-[13px] tracking-normal">"Office Theme"</div>
  <div class="w-[44px] h-full border-r border-[#a6bfe6] flex items-center justify-center"><svg class="w-[22px] h-[22px]" viewBox="0 0 22 22"><path d="M1 11l5-3 5 5 8-5 1 4-9 8z" fill="#f4f6fb" stroke="#7a8cb5"/><path d="M1 12l9 9 10-8" fill="none" stroke="#5c6f9c" stroke-width="1.600"/><path d="M10 3l9 8M20 1l-9 11" stroke="#ea5a35" stroke-width="2.600"/></svg></div>
  <div class="ml-auto w-[352px] h-full border-l border-[#7694cf] bg-gradient-to-b from-[#b4cffa] to-[#86aeea] flex items-center pl-[8px]">
    <svg class="w-[75px] h-[25px]" viewBox="0 0 75 25" fill="none"><path d="M.5.500h74v24H.5z" fill="#d9e6fa" stroke="#b9cdef"/><path d="M7 6.500h13v12H7zM12 6v13M14 9h4M14 12h4M7 12h5" stroke="#54617f" stroke-width="1.500"/><path d="M31 6h5v4h-5zM39 6h5v4h-5zM31 14h5v4h-5zM39 14h5v4h-5z" stroke="#54617f" stroke-width="1.400"/><path d="M55 6.500h15M57 7v6h11V7M62.500 13v5M58 19h9" stroke="#54617f" stroke-width="1.700"/></svg>
    <span class="ml-[10px] tracking-[-0.2px]">68%</span>
    <svg class="ml-[12px] w-[180px] h-6" viewBox="0 0 180 24" fill="none"><path d="M22 12h132" stroke="#6d8fcb"/><path d="M22 13h132M92.500 8v9" stroke="#c4dafb"/><circle cx="11" cy="12" r="9.500" fill="#e6effc" stroke="#6d83ad"/><path d="M6 12h10" stroke="#44557c" stroke-width="2.500"/><circle cx="168" cy="12" r="9.500" fill="#e6effc" stroke="#6d83ad"/><path d="M163 12h10M168 7v10" stroke="#44557c" stroke-width="2.500"/><path d="M62.500 4.500h10v11l-5 5-5-5z" fill="#d4e3fa" stroke="#5f77a8"/><path d="M67.500 8v6" stroke="#7288b3"/></svg>
    <svg class="ml-[10px] w-[20px] h-[20px]" viewBox="0 0 20 20"><rect x=".5" y=".5" width="19" height="19" rx="2" fill="#e6ebf3" stroke="#c0d0ec"/><path d="M2.500 2.500h15v15h-15z" fill="none" stroke="#6b7690" stroke-dasharray="2 2"/><path d="M10 3v5M10 12v5M3 10h5M12 10h5M8.500 5.500h3M8.500 14.500h3M5.500 8.500v3M14.500 8.500v3" stroke="#3c4a69"/></svg>
  </div>
</div>

<!-- taskbar -->
<div class="flex-1 min-h-0 bg-[#646464] flex items-start">
  <svg class="ml-[15px] mt-[9px] w-[36px] h-[33px]" viewBox="0 0 36 33" fill="#fbfbfb"><path d="M0 5l15-2.400v13H0zM16.500 2.300L36 0v15.600H16.500zM0 17.200h15v13L0 28zM16.500 17.200H36V33l-19.500-2.500z"/></svg>
  <svg class="ml-[36px] mt-[4px] w-[42px] h-[42px]" viewBox="0 0 42 42" fill="none"><path d="M34 31c-3 5-8 7-13 7-9 0-14-6-14-14s6-15 15-15c8 0 13 6 13 14v3H14" stroke="#59bdee" stroke-width="6.500"/><path d="M14 20h15" stroke="#59bdee" stroke-width="3"/><path d="M3 40C-4 30 22 2 37 3c3 1 3 5 0 11M3 40c3 1 7 0 11-3" stroke="#f2c335" stroke-width="3.200"/></svg>
  <svg class="ml-[41px] mt-[6px] w-[40px] h-[40px]" viewBox="0 0 40 40"><path d="M0 0h40v40H0z" fill="#0f830f"/><path d="M5 13l28 2 1 19-28 2z" fill="#fff"/><path d="M11 18c0-16 13-16 13-2" fill="none" stroke="#fff" stroke-width="2.200"/><path d="M10 20.500l7-.5v5h-7zM18.500 20h7v5h-7zM10 26.500h7v5l-7-.5zM18.500 26.500h7v5.500l-7-.5z" fill="#0f830f"/></svg>
  <svg class="ml-[54px] mt-[9px] w-[22px] h-[37px]" viewBox="0 0 22 37"><path d="M6 2h11l1 14 1 18-9 2-5-14z" fill="#2f2c2c"/><path d="M8 4h6v8H8z" fill="#555"/><path d="M2 28l5-9 3 17z" fill="#4d4a4a"/></svg>
  <div class="ml-[30px] flex mt-px h-[51px]">
    <div class="w-[77px] flex"><div class="w-[70px] border border-[#9b9b9b] bg-[#7c7c7c] flex items-center justify-center"><svg class="w-10 h-[42px]" viewBox="0 0 40 40"><circle cx="20" cy="20" r="19" fill="#f6c63c"/><path d="M20 20L3.500 10.500A19 19 0 0 1 36.500 10.500H20z" fill="#de4a3c"/><path d="M3.500 10.500A19 19 0 0 0 18 39l9-15-7 5-8-5z" fill="#2fa055"/><circle cx="20" cy="20" r="9" fill="#fff"/><circle cx="20" cy="20" r="7.500" fill="#4b8bf0"/></svg></div><div class="w-[6px] border border-l-0 border-[#9b9b9b] bg-[#707070]"></div></div>
    <div class="ml-[5px] w-[78px] flex"><div class="w-[71px] border border-[#9b9b9b] bg-[#7c7c7c] flex items-center justify-center"><svg class="w-[42px] h-[42px]" viewBox="0 0 42 42"><path d="M1 3h12l2 4h24v29H1z" fill="#f3dc85" stroke="#c9a950"/><path d="M4 2h6v3H4zM14 4h8v3h-8zM24 7h10v3H24z" fill="#fff"/><path d="M5 2h3v3H5z" fill="#2f9a4a"/><path d="M16 4h4v3h-4z" fill="#d43b2e"/><path d="M27 7h4v3h-4z" fill="#2d6fd6"/><path d="M1 14h38v22H1z" fill="#f8e8a4"/><path d="M8 41V26h27v15h-6v-8H14v8z" fill="#86cbee" stroke="#4b9ccc"/></svg></div><div class="w-[6px] border border-l-0 border-[#9b9b9b] bg-[#707070]"></div></div>
    <div class="ml-[4px] w-[77px] border border-[#9b9b9b] bg-[#7c7c7c] flex items-center justify-center"><svg class="w-[40px] h-[42px]" viewBox="0 0 42 42"><path d="M8 1h30l-4 34-30 4z" fill="#e9f2e4" stroke="#8eb486"/><path d="M8 3h24l-3 26H4z" fill="#cfe5c5" stroke="#5e9455"/><path d="M16 14h24v26H14z" fill="#f7fbf5" stroke="#5e9455"/><path d="M17 22h22M17 30h22M25 15v24M32 15v24" stroke="#6aa55f" stroke-width="2"/><path d="M9 8l13 18M23 7L8 27" stroke="#27672a" stroke-width="4.500"/></svg></div>
    <div class="ml-[5px] w-[77px] border border-[#9b9b9b] bg-[#7c7c7c] flex items-center justify-center"><svg class="w-[42px] h-[42px]" viewBox="0 0 42 42"><path d="M21 8c10 0 17 6 17 15 0 10-9 17-15 16-5-1-2-6-6-8s-13 3-15-6C0 16 10 8 21 8z" fill="#bcdcf2" stroke="#7fa9c9"/><circle cx="9" cy="24" r="3.500" fill="#d84a3d"/><circle cx="13" cy="16" r="3" fill="#7cbf4f"/><circle cx="21" cy="13" r="3" fill="#f0c845"/><circle cx="18" cy="27" r="4" fill="#7c7c7c"/><path d="M36 8L25 39" stroke="#e2a13b" stroke-width="3"/><path d="M33 10c-2-4 1-8 4-9 0 4 4 5 2 10z" fill="#d9b47a"/></svg></div>
    <div class="ml-[5px] w-[77px] border border-[#dadada] bg-[#b0adab] flex items-center justify-center"><svg class="w-[42px] h-[42px]" viewBox="0 0 42 42"><path d="M8 1h30l-4 34-30 4z" fill="#fdeee6" stroke="#e8926a"/><path d="M8 3h24l-3 28H4z" fill="#f9d6c3" stroke="#e2622f"/><path d="M22 9a8 8 0 0 0-8 8" fill="none" stroke="#e2622f" stroke-width="4"/><path d="M12 13h29v25H12z" fill="#e3531f" stroke="#fff"/><path d="M16 19h9v8h-9zM16 29h9v2h-9zM16 33h9v2h-9z" fill="#fff"/><path d="M18 21h5v4h-5z" fill="#e3531f"/><circle cx="32" cy="26" r="6" fill="#fff"/><path d="M32 26v-6a6 6 0 0 1 6 6z" fill="#e3531f"/></svg></div>
    <div class="ml-[5px] w-[77px] border border-[#9b9b9b] bg-[#787878] flex items-center justify-center"><svg class="w-[40px] h-[42px]" viewBox="0 0 40 42"><path d="M0 0h40v42H0z" fill="#dc4f22"/><path d="M10 15l5 2v12l7 4v3l-12-5z" fill="#fff"/><path d="M17 7l4-3c2 6 2 18 1 27l-5-3z" fill="#fff"/><path d="M25 14l5-1v18l-8 5v-4l3-2z" fill="#fff"/></svg></div>
  </div>
  <svg class="ml-auto mt-[16px] w-[115px] h-[22px]" viewBox="0 0 115 22" fill="none"><path d="M0 13l5-5 5 5z" fill="#eee"/><path d="M29.500 2v18" stroke="#f2f2f2" stroke-width="2"/><path d="M31 3h8v2h7v8H31z" fill="#e5e3dc"/><circle cx="41.500" cy="14.500" r="6" fill="#d8322f"/><path d="M39 12l5 5M44 12l-5 5" stroke="#fff" stroke-width="1.700"/><path d="M61 8h3l6-6v18l-6-6h-3z" fill="#f2f2f2"/><path d="M72 8c1.500 2 1.500 4 0 6M75 5c3 4 3 8 0 12" stroke="#e5e5e5" stroke-width="1.400"/><path d="M101 4h9v12H99M104 16v4M99 20.500h10M94 2h4v6h-4zM96 8v11h3" stroke="#eee" stroke-width="1.700"/></svg>
  <div class="ml-[18px] mr-[22px] mt-[10px] w-[71px] flex flex-col items-center gap-[8px] text-[#f0f0f0] tracking-[0.4px]"><span>2:07 PM</span><span>9/14/2020</span></div>
</div>

<!-- office button -->
<svg class="absolute left-[4px] top-[4px] w-[51px] h-[52px]" viewBox="0 0 51 52"><ellipse cx="25.500" cy="26" rx="24.500" ry="25" fill="#d9dde8" stroke="#a6aab5" stroke-width="1.500"/><ellipse cx="25.500" cy="19" rx="21" ry="16" fill="#f6f7fa"/><g fill="none"><path d="M12.500 13h10v12h-10z" stroke="#db5a20" stroke-width="4"/><path d="M28 19h8v7h-8z" stroke="#5a92d8" stroke-width="3.500"/><path d="M14.500 30h9v9h-9z" stroke="#f1b02d" stroke-width="5"/><path d="M28.500 30h8v8h-8z" stroke="#8fae3c" stroke-width="4"/><path d="M25.500 24v9M21 28.500h9" stroke="#fff" stroke-width="2"/></g></svg>

<!-- screen sharing bar -->
<div class="absolute left-[632px] top-[898px] w-[551px] h-[57px] bg-white border border-[#c5c7cc] shadow-[0_2px_3px_#6d7684] flex items-center text-[15px] tracking-[-0.05px] text-[#4c4f55]">
  <div class="ml-[14px] w-[8px] h-[15px] border-x-2 border-[#c9c9c9]"></div>
  <span class="ml-[13px]">teams.microsoft.com is sharing your screen.</span>
  <div class="ml-[13px] w-[134px] h-[43px] rounded-[4px] bg-[#1a73e8] text-white font-semibold flex items-center justify-center">Stop sharing</div>
  <span class="ml-[14px] text-[#4a7ae0] tracking-[0.14px]">Hide</span>
</div>
</div>

<!-- recording indicator -->
<svg class="absolute left-[40px] top-[108px] w-[21px] h-[21px]" viewBox="0 0 21 21"><circle cx="10.500" cy="10.500" r="8.500" fill="#000" stroke="#fff" stroke-width="1.800"/><circle cx="10.500" cy="10.500" r="6" fill="#c4314b"/></svg>
</body>
</html>
